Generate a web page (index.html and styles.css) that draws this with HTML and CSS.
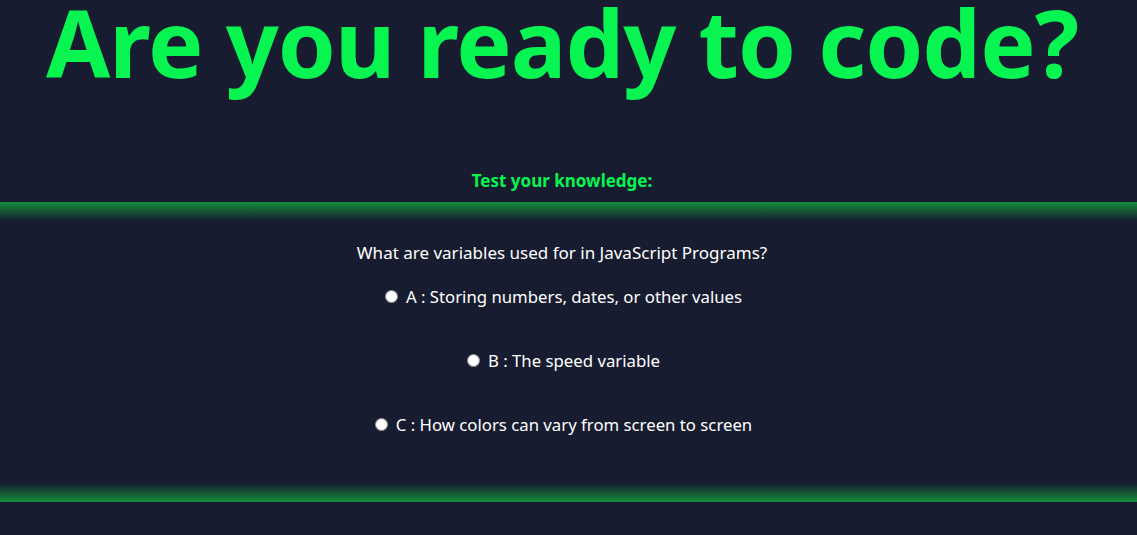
FILE: index.html
```html
<!DOCTYPE html>
<html lang="en">
<head>
<meta charset="utf-8">
<title>Are you ready to code?</title>
<link rel="stylesheet" href="styles.css">
</head>
<body>
<div class="page">
  <h1 class="title">Are you ready to code?</h1>
  <h3 class="subtitle">Test your knowledge:</h3>
</div>
<section class="quiz">
  <div class="page">
    <p class="question">What are variables used for in JavaScript Programs?</p>
    <div class="option"><input type="radio" name="q1" id="a"><label for="a">A : Storing numbers, dates, or other values</label></div>
    <div class="option"><input type="radio" name="q1" id="b"><label for="b">B : The speed variable</label></div>
    <div class="option"><input type="radio" name="q1" id="c"><label for="c">C : How colors can vary from screen to screen</label></div>
  </div>
</section>
</body>
</html>
```
FILE: styles.css
```css
html, body {
  margin: 0;
  padding: 0;
  background: #171c30;
  height: 100%;
}
body {
  font-family: "Noto Sans", "Open Sans", sans-serif;
  color: #ffffff;
  overflow: hidden;
}
.page {
  padding-right: 13px;
  text-align: center;
}
.title {
  margin: 0;
  font-size: 93px;
  letter-spacing: -1px;
  line-height: 84px;
  font-weight: 700;
  color: #08f450;
  white-space: nowrap;
}
.subtitle {
  margin: 0;
  padding: 78px 0 2px;
  font-size: 17px;
  line-height: 38px;
  font-weight: 700;
  color: #08f450;
}
.quiz {
  height: 300px;
  background:
    linear-gradient(to bottom, #178c40 0, #168238 2px, rgba(23, 28, 48, 0) 19px),
    linear-gradient(to top, #178c40 0, #168238 2px, rgba(23, 28, 48, 0) 19px),
    #171c30;
}
.question {
  margin: 0;
  padding-top: 38px;
  font-size: 17px;
  line-height: 26px;
}
.option {
  margin-top: 18px;
  height: 46px;
  display: flex;
  justify-content: center;
  align-items: flex-start;
  gap: 8px;
  font-size: 16.75px;
  line-height: 26px;
}
.option input {
  margin: 6px 0 0 3px;
  width: 13px;
  height: 13px;
}
```
